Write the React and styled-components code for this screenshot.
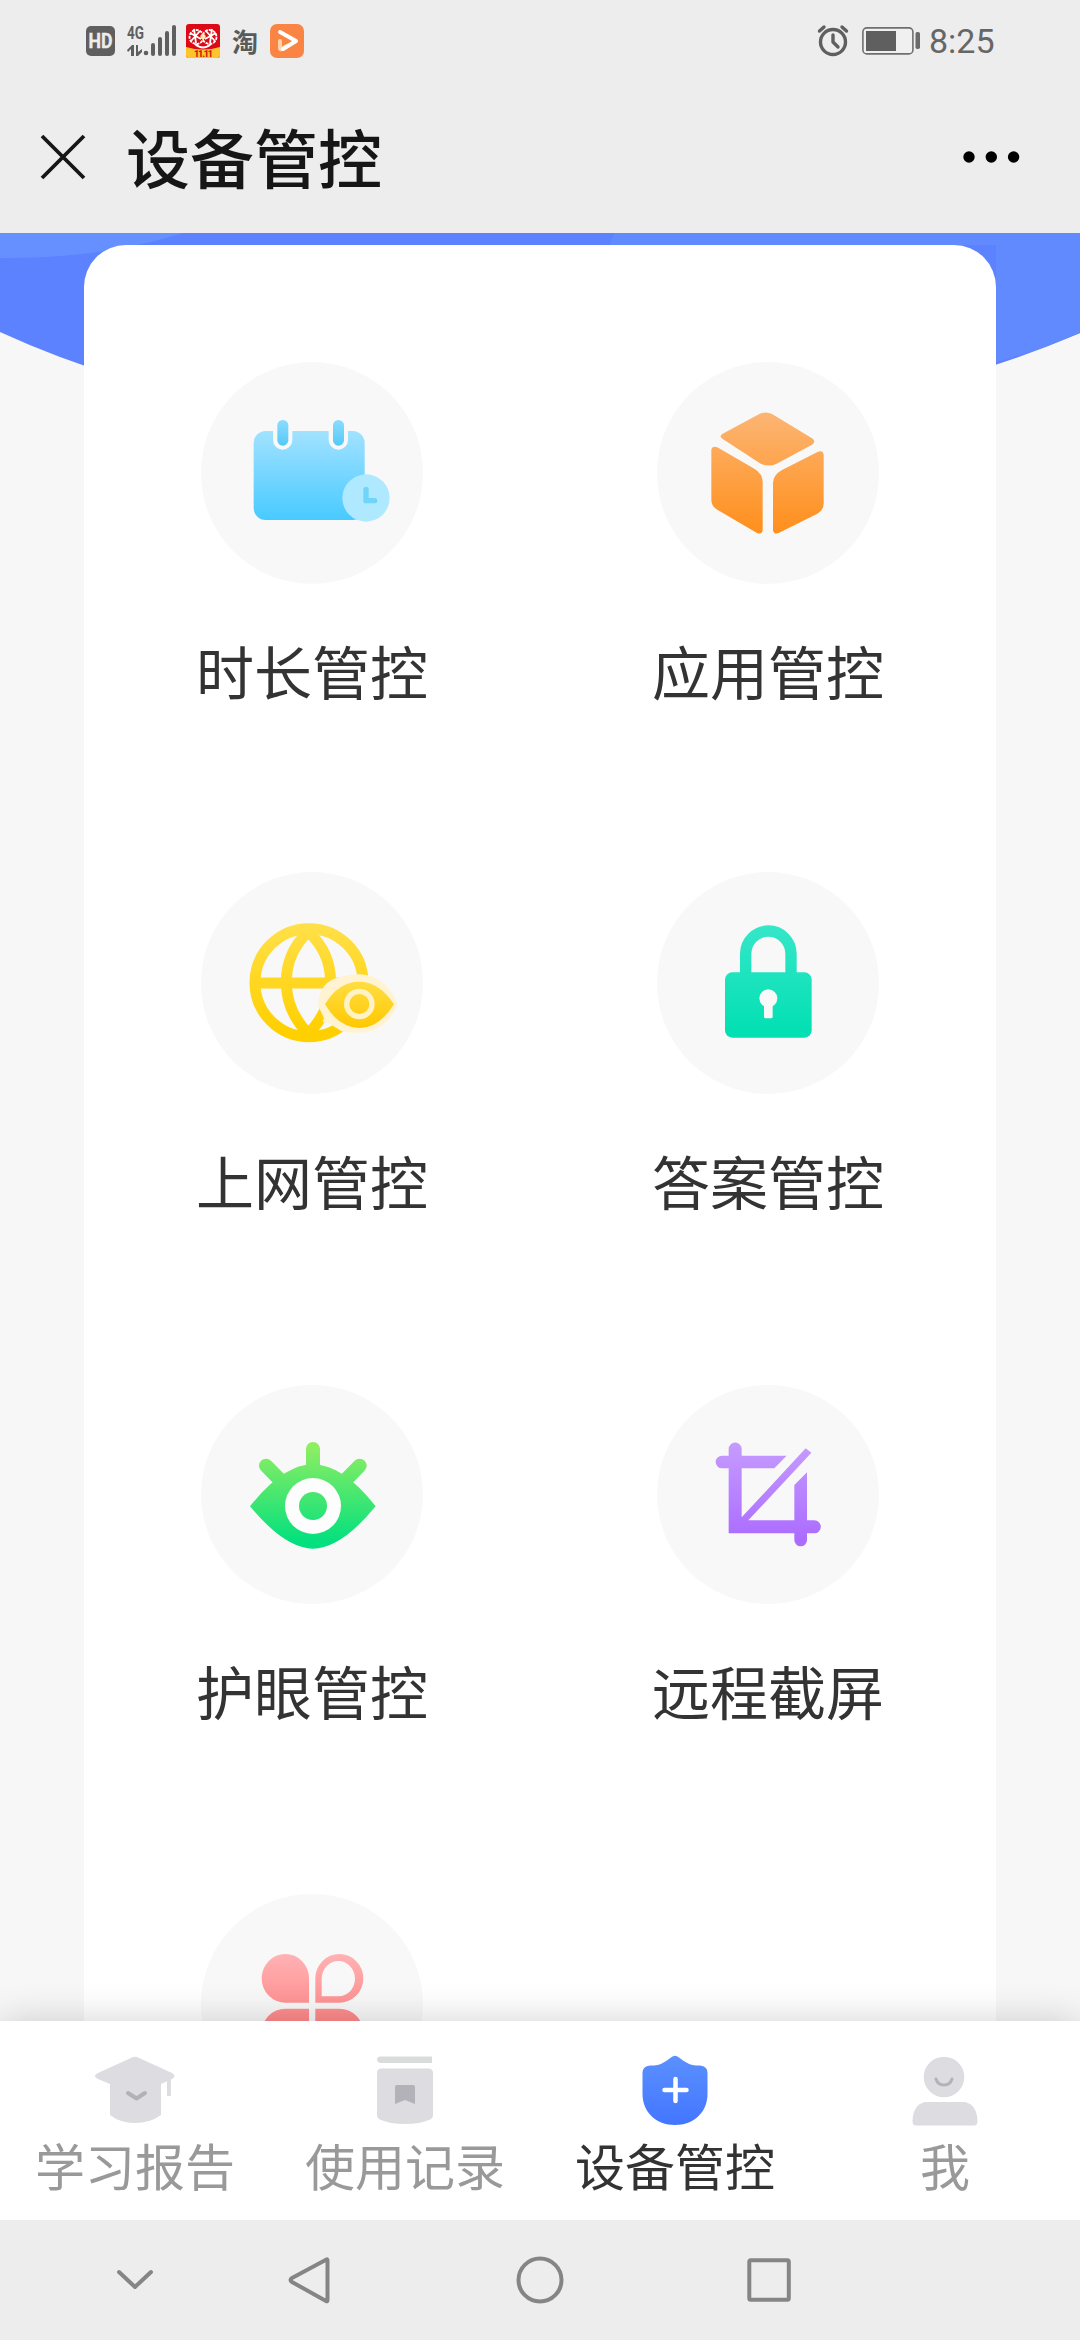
import React from 'react'
import { styled, createGlobalStyle } from 'styled-components'

const GlobalStyle = createGlobalStyle`
*{
    box-sizing: border-box;
}
body{
    margin: 0;
    background: #f7f7f7;
    font-family: "Noto Sans CJK SC", "Noto Sans", sans-serif;
}
svg{
    display: block;
    flex-shrink: 0;
    overflow: visible;
}
`

const Fade = ({ id, from, to, y1, y2 }) => (
<defs>
    <linearGradient id={id} gradientUnits="userSpaceOnUse" x1="0" x2="0" y1={y1} y2={y2}>
        <stop offset="0" stopColor={from} />
        <stop offset="1" stopColor={to} />
    </linearGradient>
</defs>
)

const CalendarIcon = () => (
<svg width="222" height="222" viewBox="33 36 666 666">
    <Fade id="cal" from="#a2e2ff" to="#48caff" y1="243" y2="510" />
    <Fade id="ring" from="#8adcff" to="#55c9f8" y1="210" y2="287" />
    <rect x="191" y="243" width="333" height="267" rx="36" fill="url(#cal)" />
    <rect x="249" y="198" width="58" height="101" rx="29" fill="#f8f8f8" />
    <rect x="416" y="198" width="58" height="101" rx="29" fill="#f8f8f8" />
    <rect x="262" y="210" width="33" height="77" rx="16" fill="url(#ring)" />
    <rect x="429" y="210" width="33" height="77" rx="16" fill="url(#ring)" />
    <circle cx="528" cy="444" r="71" fill="#aee9ff" />
    <path d="M528 418V452H554" fill="none" stroke="#6fd5fa" strokeWidth="16" strokeLinecap="round" strokeLinejoin="round" />
</svg>
)

const CubeIcon = () => (
<svg width="222" height="222" viewBox="51 36 666 666">
    <Fade id="cube" from="#fcb574" to="#ff9120" y1="187" y2="530" />
    <g fill="url(#cube)">
        <path d="M358 192Q378 183 396 192L516 265Q530 275 516 284L410 341Q385 353 360 340L248 267Q236 259 248 251Z" />
        <path d="M214 300Q216 287 232 292L343 356Q368 371 368 396V541Q366 555 351 549L232 479Q214 469 214 450Z" />
        <path d="M551 314Q549 300 534 305L426 360Q399 375 399 400V541Q401 554 416 549L532 491Q551 481 551 460Z" />
    </g>
</svg>
)

const GlobeIcon = () => (
<svg width="222" height="222" viewBox="33 36 666 666">
    <Fade id="globe" from="#ffe04a" to="#ffd000" y1="189" y2="510" />
    <Fade id="lens" from="#ffe04a" to="#ffc800" y1="350" y2="504" />
    <g fill="none" stroke="url(#globe)" strokeWidth="33">
        <circle cx="357" cy="368" r="162" />
        <path d="M352 218C268 300 268 430 352 518" />
        <path d="M358 218C443 300 443 430 358 518" />
        <path d="M195 369H440V370" />
    </g>
    <path d="M386 440L402 474L398 486L414 488L455 514Q480 519 510 518Q588 514 624 433Q588 346 510 343Q430 345 403 378Q380 410 386 440Z" fill="#fff3d2" />
    <path d="M405 433Q445 365 508 365Q568 365 612 433Q568 504 508 504Q445 502 405 433Z" fill="url(#lens)" />
    <circle cx="508" cy="432" r="38" fill="none" stroke="#fff2c4" strokeWidth="16" />
</svg>
)

const LockIcon = () => (
<svg width="222" height="222" viewBox="51 36 666 666">
    <Fade id="lock" from="#36e6c8" to="#00e0b2" y1="196" y2="525" />
    <path d="M317 345V281A68 68 0 0 1 453 281V345" fill="none" stroke="url(#lock)" strokeWidth="34" />
    <rect x="255" y="337" width="260" height="196" rx="22" fill="url(#lock)" />
    <circle cx="385" cy="415" r="27" fill="#f8f8f8" />
    <rect x="372" y="425" width="26" height="50" rx="5" fill="#f8f8f8" />
</svg>
)

const EyeIcon = () => (
<svg width="222" height="222" viewBox="33 36 666 666">
    <Fade id="eye" from="#8eee62" to="#00e07e" y1="230" y2="520" />
    <g stroke="url(#eye)" strokeWidth="42" strokeLinecap="round">
        <path d="M369 237L369.1 310" />
        <path d="M228 287L276 336" />
        <path d="M509 287L461 336" />
    </g>
    <path d="M180 409Q280 283 369 283Q458 283 557 409Q452 536 369 536Q286 536 180 409Z" fill="url(#eye)" />
    <circle cx="369" cy="408" r="84" fill="#fdfdfd" />
    <circle cx="369" cy="408" r="42" fill="url(#eye)" />
</svg>
)

const CropIcon = () => (
<svg width="222" height="222" viewBox="51 36 666 666">
    <Fade id="crop" from="#c69cff" to="#ab6cff" y1="217" y2="510" />
    <g fill="url(#crop)">
        <path d="M266 490V295H246A19 19 0 0 1 246 257H266V237A19.500 19.500 0 0 1 305 237V257H440L403 295H305V442L497 235L514 248L325 451H463V345L501 307V451H523A19.500 19.500 0 0 1 523 490H501V510A19 19 0 0 1 463 510V490Z" />
    </g>
</svg>
)

const CloverIcon = () => (
<svg width="222" height="222" viewBox="0 36 666 666">
    <Fade id="clover" from="#ffb2b4" to="#ff7c7c" y1="222" y2="480" />
    <g fill="url(#clover)">
        <path d="M324 368H253A71 73 0 1 1 324 295Z" />
        <path fillRule="evenodd" d="M343 368V295A72 73 0 1 1 415 368ZM362 349H412A50 53 0 1 0 362 296Z" />
        <path d="M324 386H253A71 73 0 1 0 324 459Z" />
        <path d="M343 386H415A72 73 0 1 1 343 459Z" />
    </g>
</svg>
)

const ReportIcon = () => (
<svg width="84" height="74" viewBox="0 0 84 74">
    <path d="M42 4Q43 3.500 45 4.500L79 20Q84 23 79 26L68 31V62Q57 70 42 70Q27 70 17 62V31L5 26Q-1 23 5 20L39 4.500Q41 3.500 42 4Z" fill="#dcdce1" />
    <path d="M74 24H78V43H74Z" fill="#dcdce1" />
    <path d="M35 40L43.500 45.500L52 40" fill="none" stroke="#b2b2b6" strokeWidth="4" strokeLinecap="round" strokeLinejoin="round" />
</svg>
)

const RecordIcon = () => (
<svg width="84" height="74" viewBox="0 0 84 74">
    <path d="M17 3.500H69V10H17Q14 9 14 6.800Q14 4 17 3.500Z" fill="#dadcdc" />
    <path d="M14 20Q14 15.500 18.500 15.500H65.500Q70 15.500 70 20V62Q70 65 67 66.500Q57 71 42 71Q27 71 17 66.500Q14 65 14 62Z" fill="#dcdce1" />
    <path d="M32 34Q32 32 34 32H50Q52 32 52 34V51L42 47L32 51Z" fill="#b2b2b8" />
</svg>
)

const ShieldIcon = () => (
<svg width="84" height="74" viewBox="0 0 84 74">
    <Fade id="shield" from="#5b90ff" to="#4376ff" y1="3" y2="72" />
    <path d="M38 4.500Q42 1 46 4.500Q56 12.500 63 12.500H67Q74.500 13 74.500 20V41C74.500 59 61 72 42 72C23 72 9.500 59 9.500 41V20Q9.500 13 17 12.500H21Q28 12.500 38 4.500Z" fill="url(#shield)" />
    <path d="M42.500 26V48M31.500 37H53.500" stroke="#fff" strokeWidth="4.500" strokeLinecap="round" />
</svg>
)

const MeIcon = () => (
<svg width="84" height="74" viewBox="0 0 84 74">
    <circle cx="41" cy="24" r="20.300" fill="#dcdce1" />
    <path d="M33 26Q35 32 41 32Q47 32 49 26" fill="none" stroke="#b2b2b8" strokeWidth="3" strokeLinecap="round" />
    <path d="M22 49H62Q74 52 74.500 68Q74.500 72.500 71 72.500H13Q9.500 72.500 9.500 68Q10 52 22 49Z" fill="#dcdce1" />
</svg>
)

const tools = [
    { name: '时长管控', Icon: CalendarIcon },
    { name: '应用管控', Icon: CubeIcon },
    { name: '上网管控', Icon: GlobeIcon },
    { name: '答案管控', Icon: LockIcon },
    { name: '护眼管控', Icon: EyeIcon, inset: 3 },
    { name: '远程截屏', Icon: CropIcon, inset: 3 },
    { name: '', Icon: CloverIcon, inset: 2 },
]

const tabs = [
    { name: '学习报告', Icon: ReportIcon },
    { name: '使用记录', Icon: RecordIcon },
    { name: '设备管控', Icon: ShieldIcon, active: true },
    { name: '我', Icon: MeIcon },
]

const StatusBar = () => (
<StatusStyle>
    <div className='side'>
        <Hd>
            <svg width="29" height="30">
                <text x="2.500" y="22" fill="#ececec" stroke="#ececec" strokeWidth="0.400" fontFamily="Roboto" fontWeight="700" fontSize="20" textLength="24" lengthAdjust="spacingAndGlyphs">HD</text>
            </svg>
        </Hd>
        <svg className='signal' width="51" height="34" fill="#5f5f5f">
            <text x="1" y="14.500" fontFamily="Roboto" fontWeight="700" fontSize="18" textLength="17" lengthAdjust="spacingAndGlyphs">4G</text>
            <path d="M1 26L6 21H8V32H5V25L2 28ZM10 21H12V28L16 25V28L12 32H10Z" />
            <circle cx="20" cy="29" r="2.300" />
            <rect x="25" y="19" width="4" height="13" rx="2" />
            <rect x="32" y="13" width="4" height="19" rx="2" />
            <rect x="39" y="7" width="4" height="25" rx="2" />
            <rect x="46" y="1" width="4" height="31" rx="2" />
        </svg>
        <svg className='sale' width="34" height="34">
            <rect width="34" height="34" rx="3" fill="#dc0a14" />
            <path d="M0 23Q17 28 34 23V31Q34 34 31 34H3Q0 34 0 31Z" fill="#ffc42c" />
            <g fill="none" stroke="#fff" strokeWidth="1.800">
                <circle cx="10.500" cy="13" r="7" strokeDasharray="3 1" />
                <circle cx="23.500" cy="13" r="7" strokeDasharray="3 1" />
                <path d="M4 9L15 15M8 5L10 19M5 17L14 7M30 9L19 15M26 5L24 19M29 17L20 7M9 20Q17 27 25 20" />
            </g>
            <circle cx="17" cy="12.500" r="2.600" fill="#ffe9b0" />
            <text x="8" y="33" fill="#c8200c" fontFamily="Roboto" fontWeight="900" fontSize="9" textLength="19">11.11</text>
        </svg>
        <Tao>淘</Tao>
        <svg width="34" height="34">
            <rect width="34" height="34" rx="7" fill="#fa8444" />
            <path d="M10 17V24Q10 26 12 25L17 22" fill="none" stroke="#ffd2a8" strokeWidth="4" strokeLinecap="round" />
            <path d="M10 8L26 17L13 25" fill="none" stroke="#fff" strokeWidth="4" strokeLinecap="round" strokeLinejoin="round" />
        </svg>
    </div>
    <div className='side'>
        <svg width="32" height="32" fill="none" stroke="#5f5f5f" strokeLinecap="round" strokeLinejoin="round">
            <circle cx="16" cy="17" r="12.500" strokeWidth="3.400" />
            <path d="M16 10V17L21 22" strokeWidth="3.400" />
            <path d="M2.500 6L7 2M29.500 6L25 2" strokeWidth="3.400" />
        </svg>
        <svg className='battery' width="58" height="28">
            <rect x="0.900" y="0.900" width="50" height="26" rx="4" fill="#f0f0f0" stroke="#6f6f6f" strokeWidth="1.600" />
            <rect x="4" y="4" width="30" height="20" fill="#5f5f5f" />
            <rect x="53.500" y="5" width="4.500" height="17" rx="1.800" fill="#6a6a6a" />
        </svg>
        <Time>8:25</Time>
    </div>
</StatusStyle>
)

const App = () => {
return (
<>
<GlobalStyle />
<Page>
    <StatusBar />
    <Header>
        <svg width="50" height="50" viewBox="0 0 50 50">
            <path d="M4 4L46 46M46 4L4 46" stroke="#161616" strokeWidth="3.800" />
        </svg>
        <h1>设备管控</h1>
        <svg width="60" height="14">
            <circle cx="7" cy="7" r="5.700" />
            <circle cx="29.300" cy="7" r="5.700" />
            <circle cx="51.600" cy="7" r="5.700" />
        </svg>
    </Header>
    <Content>
        <Banner width="1080" height="210">
            <path d="M0 0H1080V100Q860 195 540 200Q220 200 0 99Z" fill="#5d82ff" />
            <path d="M0 0H183Q100 26 0 25Z" fill="#6690ff" />
            <path d="M614 0H1080V100Q1040 117 996 129V12H610Z" fill="#618aff" />
        </Banner>
        <Card>
            {tools.map(({ name, Icon, inset }, i) => (
            <Tool key={i}>
                <Circle $inset={inset}><Icon /></Circle>
                <p>{name}</p>
            </Tool>
            ))}
        </Card>
    </Content>
    <TabBar>
        {tabs.map(({ name, Icon, active }) => (
        <Tab key={name} $active={active}>
            <Icon />
            <span>{name}</span>
        </Tab>
        ))}
    </TabBar>
    <SystemNav>
        <svg width="50" height="50">
            <path d="M9 17L25 32L41 17" />
        </svg>
        <NavGap $w={124} />
        <svg width="50" height="50">
            <path d="M42.500 4.500Q43.500 4 43.500 6V45Q43.500 47 42 46L8 27Q5 25 8 23Z" />
        </svg>
        <NavGap $w={181} />
        <svg width="50" height="50">
            <circle cx="25" cy="25" r="21.500" />
        </svg>
        <NavGap $w={179} />
        <svg width="50" height="50">
            <rect x="5.300" y="5.300" width="39.500" height="39.500" rx="1.500" />
        </svg>
    </SystemNav>
</Page>
</>
)
}

const Page = styled.div`
width: 1080px;
height: 2340px;
display: flex;
flex-direction: column;
overflow: hidden;
`

const StatusStyle = styled.div`
height: 82px;
background: #ededed;
display: flex;
justify-content: space-between;
align-items: center;
padding: 0 86px;
.side{
    display: flex;
    align-items: center;
}
.signal{
    margin-left: 11px;
}
.sale{
    margin-left: 9px;
}
.battery{
    margin-left: 13px;
}
`

const Hd = styled.div`
width: 29px;
height: 30px;
border-radius: 5px;
background: #5f5f5f;
`

const Tao = styled.span`
width: 26px;
margin: 0 12px;
color: #5a5a5a;
font-size: 26px;
font-weight: 700;
line-height: 34px;
`

const Time = styled.span`
width: 65px;
margin-left: 9px;
font-family: Roboto, sans-serif;
font-size: 34px;
line-height: 34px;
color: #666;
`

const Header = styled.header`
height: 151px;
background: #ededed;
display: flex;
align-items: center;
padding: 0 58px 2px 38px;
h1{
    flex: 1;
    margin: 0 0 4px 38px;
    color: #161616;
    font-size: 64px;
    font-weight: 500;
    line-height: 64px;
}
`

const Content = styled.main`
position: relative;
flex: 1;
min-height: 0;
overflow: hidden;
padding: 12px 84px 0;
`

/* blue curve that sits behind the card */
const Banner = styled.svg`
position: absolute;
top: 0;
left: 0;
`

const Card = styled.section`
position: relative;
display: grid;
grid-template-columns: 1fr 1fr;
grid-auto-rows: 510px;
padding-top: 117px;
background: white;
border-radius: 42px 42px 0 0;
`

const Tool = styled.div`
display: flex;
flex-direction: column;
align-items: center;
p{
    margin: 57px 0 0;
    color: #333;
    font-size: 58px;
    line-height: 58px;
}
`

const Circle = styled.div`
width: 222px;
height: ${({ $inset = 0 }) => 222 - $inset}px;
margin-top: ${({ $inset = 0 }) => $inset}px;
border-radius: 50%;
background: #f8f8f8;
svg{
    margin-top: ${({ $inset = 0 }) => -$inset}px;
}
`

const TabBar = styled.nav`
position: relative;
height: 199px;
flex-shrink: 0;
background: white;
box-shadow: 0 0 36px rgba(0,0,0,.18);
display: grid;
grid-template-columns: repeat(4, 1fr);
`

const Tab = styled.div`
display: flex;
flex-direction: column;
align-items: center;
padding-top: 32px;
gap: 12px;
color: ${({ $active }) => ($active ? '#333' : '#999')};
font-size: 50px;
line-height: 50px;
`

const SystemNav = styled.footer`
position: relative;
height: 120px;
flex-shrink: 0;
background: #ededed;
display: flex;
align-items: center;
padding-left: 110px;
svg{
    fill: none;
    stroke: #858585;
    stroke-width: 4;
    stroke-linecap: round;
    stroke-linejoin: round;
}
`

const NavGap = styled.i`
width: ${({ $w }) => $w}px;
`

export default App
